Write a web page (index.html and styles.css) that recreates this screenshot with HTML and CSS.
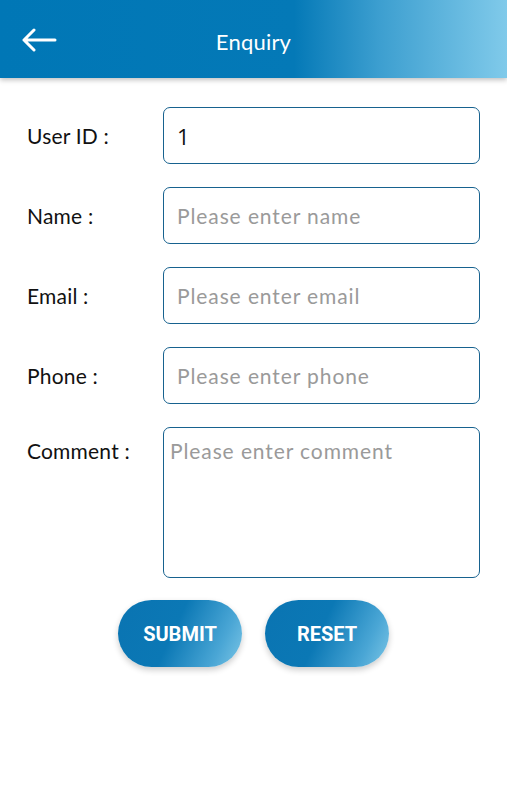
FILE: index.html
```html
<!DOCTYPE html>
<html>
<head>
<meta charset="utf-8">
<link rel="stylesheet" href="styles.css">
</head>
<body>
<header class="appbar">
  <button class="back" aria-label="Back">
    <svg width="36" height="24" viewBox="0 0 36 24"><path d="M34 12H3M13 2L3 12l10 10" fill="none" stroke="#fff" stroke-width="3" stroke-linecap="round" stroke-linejoin="round"/></svg>
  </button>
  <h1 class="title">Enquiry</h1>
</header>
<main class="form">
  <div class="row">
    <label class="label">User ID :</label>
    <input class="field value" type="text" value="1">
  </div>
  <div class="row">
    <label class="label">Name :</label>
    <input class="field" type="text" placeholder="Please enter name">
  </div>
  <div class="row">
    <label class="label">Email :</label>
    <input class="field" type="text" placeholder="Please enter email">
  </div>
  <div class="row">
    <label class="label">Phone :</label>
    <input class="field" type="text" placeholder="Please enter phone">
  </div>
  <div class="row top">
    <label class="label comment-label">Comment :</label>
    <textarea class="field area" placeholder="Please enter comment"></textarea>
  </div>
  <div class="actions">
    <button class="btn">SUBMIT</button>
    <button class="btn">RESET</button>
  </div>
</main>
</body>
</html>
```
FILE: styles.css
```css
* { box-sizing: border-box; }
body {
  margin: 0;
  background: #fff;
  font-family: "Lato", "Noto Sans", sans-serif;
  width: 507px;
  height: 800px;
  overflow: hidden;
}
.appbar {
  position: relative;
  height: 78px;
  display: flex;
  align-items: center;
  justify-content: center;
  background: linear-gradient(90deg, #0077b6 0%, #0479b7 58%, #3d9fd0 75%, #80caea 100%);
  box-shadow: 0 2px 5px rgba(0,0,0,0.25);
}
.back {
  position: absolute;
  left: 21px;
  top: 28px;
  border: 0;
  padding: 0;
  background: none;
  display: flex;
}
.title {
  margin: 5px 0 0 0;
  color: #fff;
  font-weight: 400;
  font-size: 22px;
  letter-spacing: 0.2px;
}
.form {
  padding: 29px 27px 0 27px;
  display: flex;
  flex-direction: column;
  gap: 23px;
}
.row {
  display: flex;
  align-items: center;
}
.row.top { align-items: flex-start; }
.label {
  width: 136px;
  flex: none;
  font-size: 21px;
  letter-spacing: 0.2px;
  color: #111;
}
.comment-label { margin-top: 11px; }
.field {
  width: 317px;
  height: 57px;
  border: 1.5px solid #17628f;
  border-radius: 7px;
  padding: 0 13px;
  font-family: "Lato", "Noto Sans", sans-serif;
  font-size: 21px;
  letter-spacing: 0.9px;
  color: #111;
  background: #fff;
  outline: none;
}
.field::placeholder { color: #9a9a9a; }
.field.value { font-family: "Open Sans", sans-serif; font-size: 22px; letter-spacing: 0; }
.area {
  height: 151px;
  resize: none;
  padding: 10px 6px;
  line-height: 26px;
}
.actions {
  display: flex;
  justify-content: center;
  gap: 23px;
  margin-top: -1px;
}
.btn {
  width: 124px;
  height: 67px;
  border: 0;
  border-radius: 34px;
  background: linear-gradient(115deg, #0a74b2 0%, #0b78b5 45%, #4aa6d5 80%, #7cc6e6 100%);
  color: #fff;
  font-family: "Roboto", sans-serif;
  font-weight: 700;
  font-size: 20px;
  box-shadow: 0 3px 6px rgba(0,0,0,0.2);
}
```
